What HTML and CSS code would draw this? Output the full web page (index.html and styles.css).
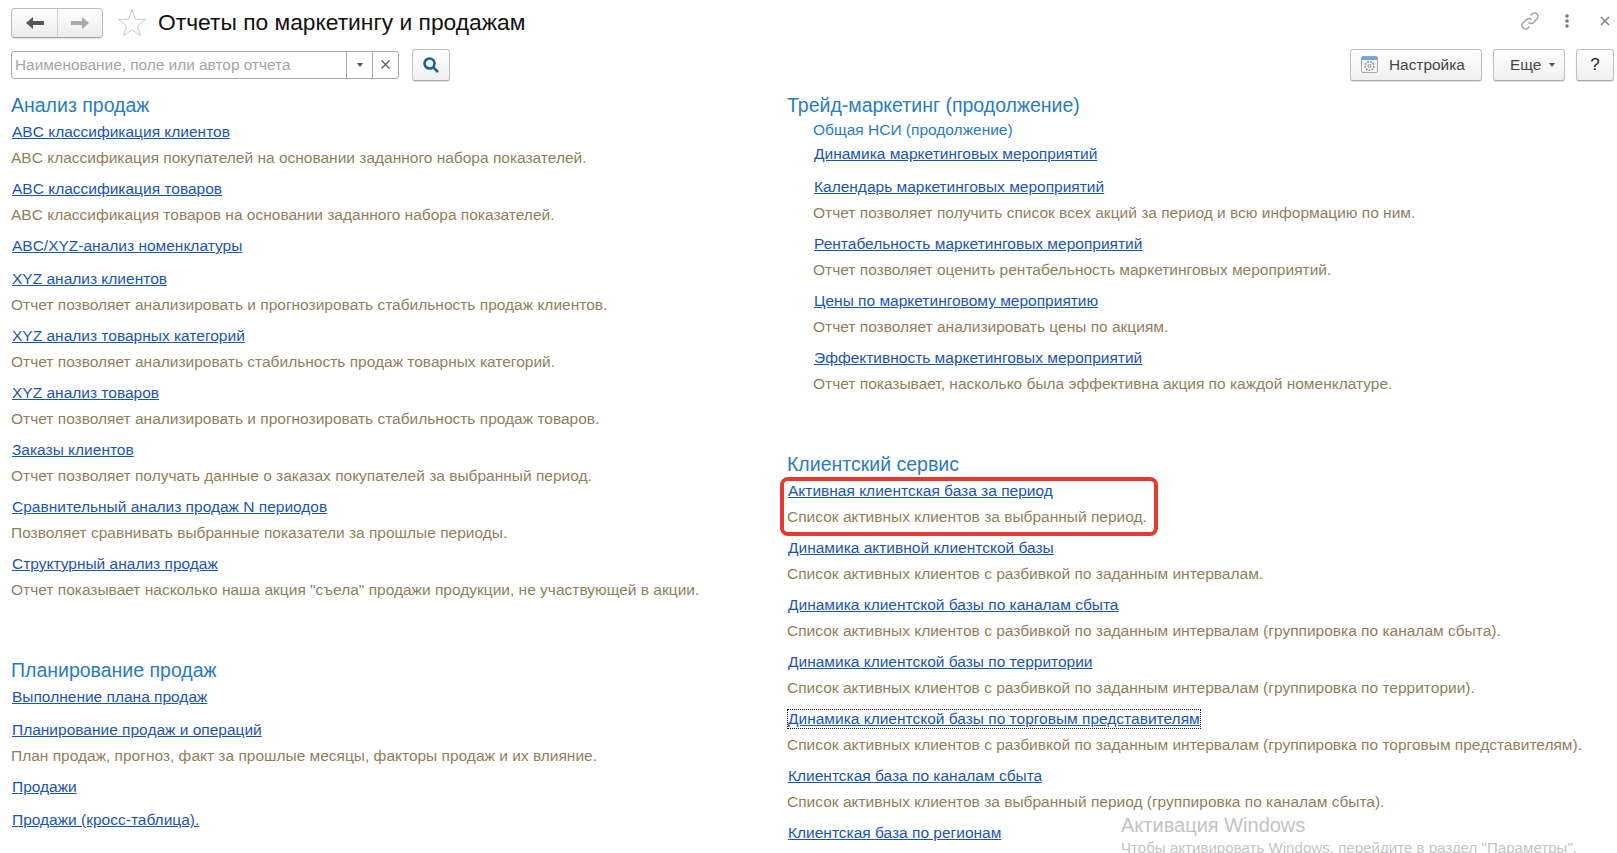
FILE: index.html
```html
<!DOCTYPE html>
<html lang="ru">
<head>
<meta charset="utf-8">
<title>Отчеты по маркетингу и продажам</title>
<link rel="stylesheet" href="styles.css">
</head>
<body>
<div class="page">
  <header class="titlebar">
    <div class="nav">
      <button class="nav-btn"><svg width="18" height="12" viewBox="0 0 18 12"><path d="M0 6 7 0V4h11v4H7v4z" fill="#555"/></svg></button>
      <button class="nav-btn"><svg width="18" height="12" viewBox="0 0 18 12"><path d="M18 6 11 0V4H0v4h11v4z" fill="#aaa"/></svg></button>
    </div>
    <svg class="star" width="30" height="30" viewBox="0 0 30 30"><path d="M15 1.500 18.400 11.200 28.700 11.400 20.500 17.700 23.500 27.700 15 21.800 6.500 27.700 9.500 17.700 1.300 11.400 11.600 11.200z" fill="#fff" stroke="#c9c9c9"/></svg>
    <h1 class="title">Отчеты по маркетингу и продажам</h1>
    <div class="win-icons">
      <svg width="22" height="22" viewBox="0 0 22 22" fill="none" stroke="#a0a0a0" stroke-width="1.500"><path d="M9.500 12.500a3.500 3.500 0 0 0 5 0l3.500-3.500a3.500 3.500 0 0 0-5-5l-1.500 1.500"/><path d="M12.500 9.500a3.500 3.500 0 0 0-5 0L4 13a3.500 3.500 0 0 0 5 5l1.500-1.500"/></svg>
      <svg class="dots" width="6" height="14" viewBox="0 0 6 14" fill="#7a7a7a"><circle cx="3" cy="2" r="1.800"/><circle cx="3" cy="7" r="1.800"/><circle cx="3" cy="12" r="1.800"/></svg>
      <svg class="close" width="10" height="10" viewBox="0 0 10 10" stroke="#808080" stroke-width="1.500"><path d="M1 1l8 8M9 1l-8 8"/></svg>
    </div>
  </header>
  <div class="toolbar">
    <div class="search">
      <span class="search-text">Наименование, поле или автор отчета</span>
      <span class="search-part"><i class="caret"></i></span>
      <span class="search-part"><svg width="9" height="9" viewBox="0 0 9 9" stroke="#555" stroke-width="1.100"><path d="M.5.500l8 8M8.500.500l-8 8"/></svg></span>
    </div>
    <button class="btn search-btn"><svg width="18" height="18" viewBox="0 0 18 18" fill="none" stroke="#1a6296" stroke-width="2.600"><circle cx="7.500" cy="7.500" r="5"/><path d="M11.300 11.300 16 16"/></svg></button>
    <div class="toolbar-right">
      <button class="btn setup-btn"><svg width="17" height="17" viewBox="0 0 17 17"><rect x=".5" y=".5" width="16" height="16" rx="1.500" fill="#f2f4f6" stroke="#a8a8a8"/><path d="M.5 4V2A1.500 1.500 0 0 1 2 .5h13A1.500 1.500 0 0 1 16.500 2V4z" fill="#68a8e0"/><circle cx="8.500" cy="10" r="4.300" fill="none" stroke="#8f8f8f" stroke-dasharray="1.800 1.100" stroke-width="1.500"/><circle cx="8.500" cy="10" r="1.500" fill="none" stroke="#8f8f8f"/></svg>Настройка</button>
      <button class="btn more-btn">Еще<i class="caret"></i></button>
      <button class="btn help-btn">?</button>
    </div>
  </div>
  <main class="columns">
    <div class="column">
      <section class="group">
        <h2>Анализ продаж</h2>
        <div class="item"><a href="#">ABC классификация клиентов</a><p>ABC классификация покупателей на основании заданного набора показателей.</p></div>
        <div class="item"><a href="#">ABC классификация товаров</a><p>ABC классификация товаров на основании заданного набора показателей.</p></div>
        <div class="item bare"><a href="#">ABC/XYZ-анализ номенклатуры</a></div>
        <div class="item"><a href="#">XYZ анализ клиентов</a><p>Отчет позволяет анализировать и прогнозировать стабильность продаж клиентов.</p></div>
        <div class="item"><a href="#">XYZ анализ товарных категорий</a><p>Отчет позволяет анализировать стабильность продаж товарных категорий.</p></div>
        <div class="item"><a href="#">XYZ анализ товаров</a><p>Отчет позволяет анализировать и прогнозировать стабильность продаж товаров.</p></div>
        <div class="item"><a href="#">Заказы клиентов</a><p>Отчет позволяет получать данные о заказах покупателей за выбранный период.</p></div>
        <div class="item"><a href="#">Сравнительный анализ продаж N периодов</a><p>Позволяет сравнивать выбранные показатели за прошлые периоды.</p></div>
        <div class="item"><a href="#">Структурный анализ продаж</a><p>Отчет показывает насколько наша акция "съела" продажи продукции, не участвующей в акции.</p></div>
      </section>
      <section class="group">
        <h2>Планирование продаж</h2>
        <div class="item bare"><a href="#">Выполнение плана продаж</a></div>
        <div class="item"><a href="#">Планирование продаж и операций</a><p>План продаж, прогноз, факт за прошлые месяцы, факторы продаж и их влияние.</p></div>
        <div class="item bare"><a href="#">Продажи</a></div>
        <div class="item bare"><a href="#">Продажи (кросс-таблица).</a></div>
      </section>
    </div>
    <div class="column">
      <section class="group">
        <h2>Трейд-маркетинг (продолжение)</h2>
        <div class="nested">
          <h3>Общая НСИ (продолжение)</h3>
          <div class="item bare"><a href="#">Динамика маркетинговых мероприятий</a></div>
          <div class="item"><a href="#">Календарь маркетинговых мероприятий</a><p>Отчет позволяет получить список всех акций за период и всю информацию по ним.</p></div>
          <div class="item"><a href="#">Рентабельность маркетинговых мероприятий</a><p>Отчет позволяет оценить рентабельность маркетинговых мероприятий.</p></div>
          <div class="item"><a href="#">Цены по маркетинговому мероприятию</a><p>Отчет позволяет анализировать цены по акциям.</p></div>
          <div class="item"><a href="#">Эффективность маркетинговых мероприятий</a><p>Отчет показывает, насколько была эффективна акция по каждой номенклатуре.</p></div>
        </div>
      </section>
      <section class="group">
        <h2>Клиентский сервис</h2>
        <div class="item marked"><a href="#">Активная клиентская база за период</a><p>Список активных клиентов за выбранный период.</p></div>
        <div class="item"><a href="#">Динамика активной клиентской базы</a><p>Список активных клиентов с разбивкой по заданным интервалам.</p></div>
        <div class="item"><a href="#">Динамика клиентской базы по каналам сбыта</a><p>Список активных клиентов с разбивкой по заданным интервалам (группировка по каналам сбыта).</p></div>
        <div class="item"><a href="#">Динамика клиентской базы по территории</a><p>Список активных клиентов с разбивкой по заданным интервалам (группировка по территории).</p></div>
        <div class="item"><a href="#" class="focused">Динамика клиентской базы по торговым представителям</a><p>Список активных клиентов с разбивкой по заданным интервалам (группировка по торговым представителям).</p></div>
        <div class="item"><a href="#">Клиентская база по каналам сбыта</a><p>Список активных клиентов за выбранный период (группировка по каналам сбыта).</p></div>
        <div class="item"><a href="#">Клиентская база по регионам</a></div>
      </section>
    </div>
  </main>
  <aside class="watermark">
    <div class="wm-title">Активация Windows</div>
    <div class="wm-text">Чтобы активировать Windows, перейдите в раздел "Параметры".</div>
  </aside>
</div>
</body>
</html>
```
FILE: styles.css
```css
*, *::before, *::after { box-sizing: border-box; }
html, body { margin: 0; padding: 0; height: 100%; overflow: hidden; background: #fff; }
body { font-family: "Liberation Sans", Arial, sans-serif; font-size: 15.500px; color: #333; }
.page { position: relative; width: 1617px; height: 853px; overflow: hidden; }
button { font-family: inherit; margin: 0; padding: 0; cursor: default; }

.titlebar { display: flex; align-items: center; height: 30px; margin-top: 8px; padding-left: 11px; }
.nav { display: flex; width: 92px; height: 30px; border: 1px solid #bdbdbd; border-bottom-color: #a5a5a5; border-radius: 4px; background: linear-gradient(#fff, #ececec); box-shadow: 0 1px 1px rgba(0,0,0,.12); overflow: hidden; }
.nav-btn { display: flex; align-items: center; justify-content: center; border: 0; background: none; width: 45px; }
.nav-btn + .nav-btn { flex: 1; border-left: 1px solid #cfcfcf; }
.star { margin-left: 14px; flex: none; }
.title { margin: 0 0 2px 11px; font-size: 22.800px; font-weight: 400; color: #111; line-height: 30px; }
.win-icons { display: flex; align-items: center; margin-left: auto; margin-bottom: 5px; }
.win-icons .dots { margin-left: 23px; }
.win-icons .close { margin-left: 30px; margin-right: 7px; }

.toolbar { display: flex; align-items: center; height: 33px; margin-top: 10px; padding: 0 3px 0 11px; }
.search { display: flex; width: 388px; height: 28px; border: 1px solid #a8a8a8; border-radius: 3px; background: #fff; }
.search-text { flex: 1; padding-left: 3px; line-height: 26px; font-size: 15.400px; color: #a6a6a6; white-space: nowrap; }
.search-part { display: flex; align-items: center; justify-content: center; width: 26px; border-left: 1px solid #a8a8a8; }
.caret { display: inline-block; width: 0; height: 0; border-left: 3.500px solid transparent; border-right: 3.500px solid transparent; border-top: 4px solid #555; }
.btn { display: flex; align-items: center; justify-content: center; height: 32px; border: 1px solid #c0c0c0; border-bottom-color: #a8a8a8; border-radius: 3px; background: linear-gradient(#fff, #f0f0f0); box-shadow: 0 1px 1px rgba(0,0,0,.12); font-size: 15.400px; color: #444; }
.search-btn { width: 38px; margin-left: 13px; }
.toolbar-right { display: flex; margin-left: auto; }
.setup-btn { width: 132px; gap: 11px; justify-content: flex-start; padding-left: 10px; }
.more-btn { width: 72px; margin-left: 11px; gap: 8px; justify-content: flex-start; padding-left: 16px; }
.help-btn { width: 38px; margin-left: 11px; color: #222; font-size: 17px; }

.columns { display: grid; grid-template-columns: 776px 1fr; padding-left: 11px; margin-top: 11px; }
.group { margin-bottom: 54px; }
.column { min-width: 0; }
h2 { margin: 0; height: 27px; font-size: 19.500px; line-height: 26px; font-weight: 400; color: #2a7cc2; white-space: nowrap; }
h3 { margin: 0; height: 22px; font-size: 15.500px; line-height: 22px; font-weight: 400; color: #2a7cc2; }
.nested { padding-left: 26px; }
.item { display: flex; flex-direction: column; align-items: flex-start; margin-bottom: 5px; }
.item.bare { margin-bottom: 7px; }
.item a { display: block; height: 26px; line-height: 26px; margin-left: 1px; color: #1a55b5; text-decoration: underline; white-space: nowrap; }
.item p { margin: 0; height: 26px; line-height: 26px; color: #917f5c; white-space: nowrap; }
.item a.focused { height: 18px; line-height: 18px; margin-top: 4px; margin-bottom: 4px; outline: 1px dotted #111; }
.item.marked { position: relative; }
.item.marked::after { content: ""; position: absolute; left: -7px; top: -1px; width: 378px; height: 59px; border: 4px solid #e53a2f; border-radius: 8px; pointer-events: none; }

.watermark { position: absolute; left: 1121px; top: 812px; color: #c4c4c4; white-space: nowrap; }
.wm-title { font-size: 20px; line-height: 26px; }
.wm-text { font-size: 15.100px; line-height: 20px; }
```
